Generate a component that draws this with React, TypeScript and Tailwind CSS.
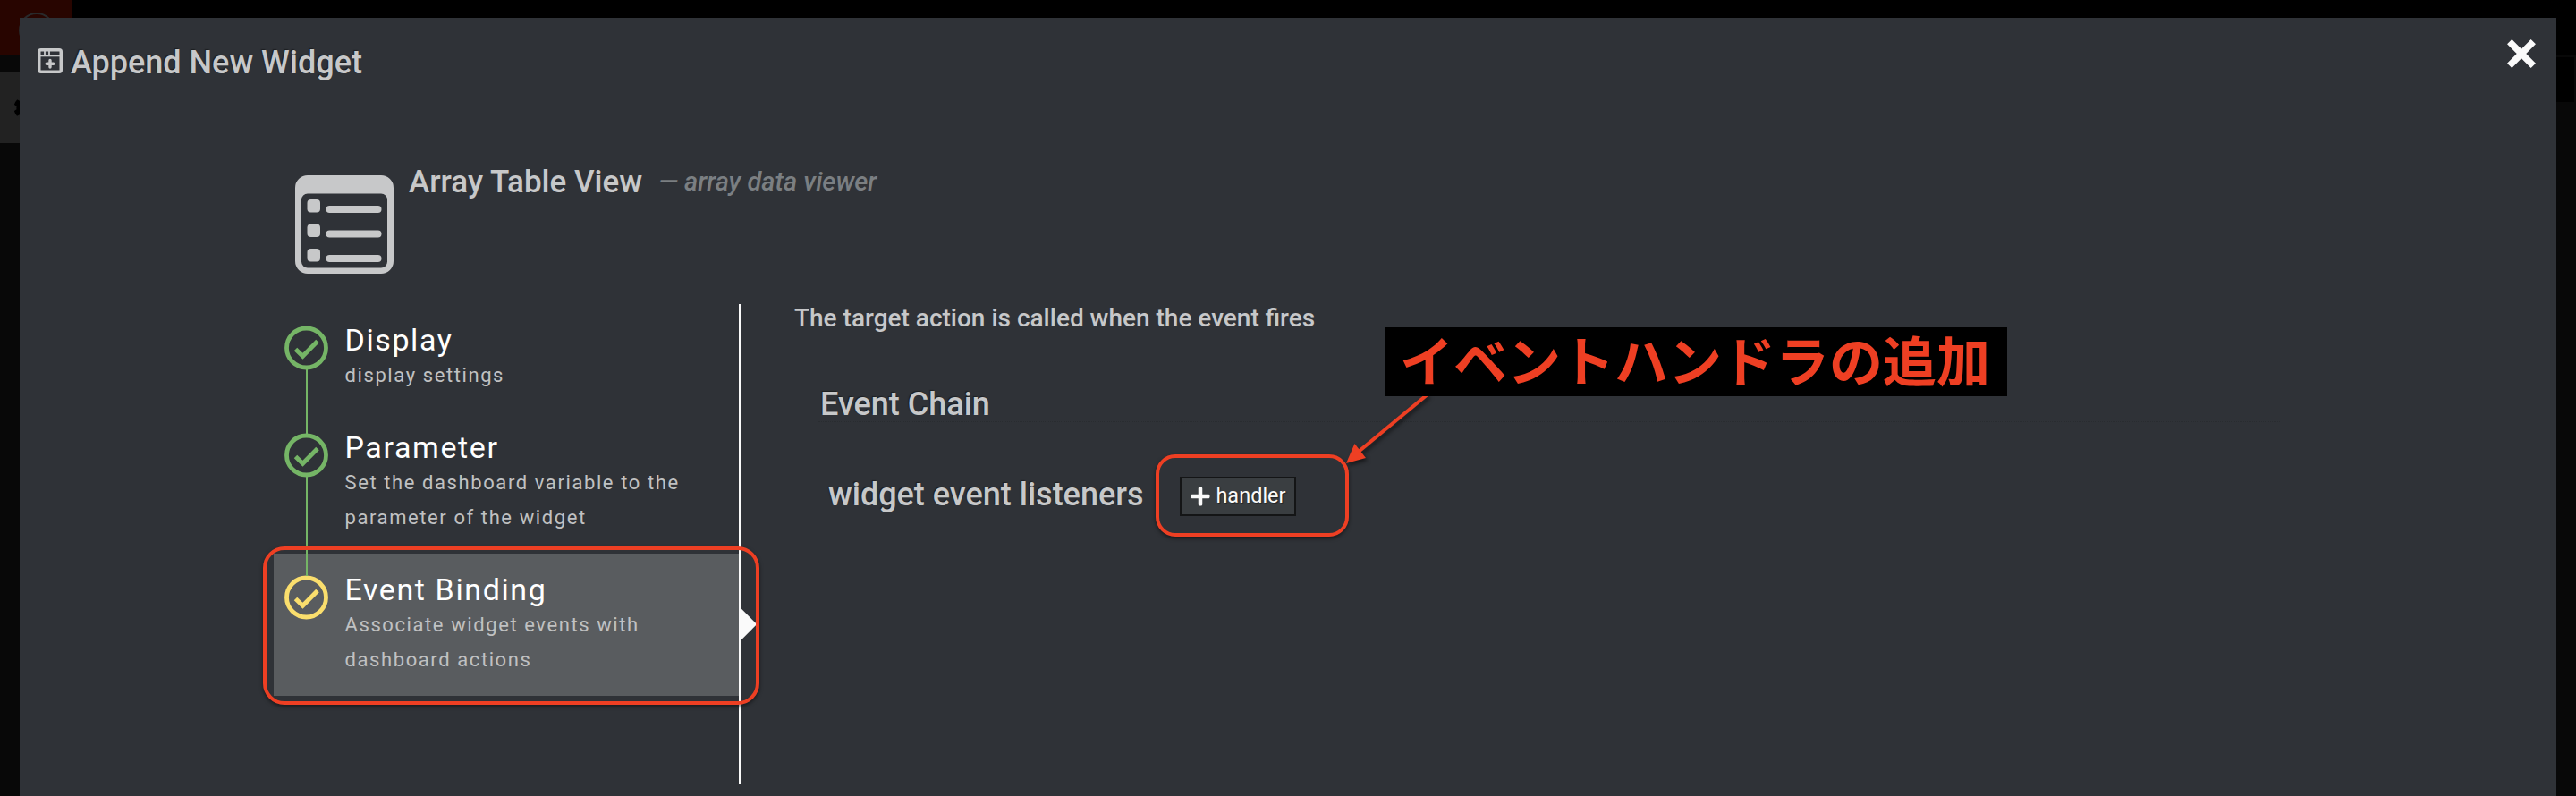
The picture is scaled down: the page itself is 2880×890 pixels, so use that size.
import React from 'react';
import { FaCog, FaPlus } from 'react-icons/fa';

interface Step {
    title: string;
    description: string[];
    active?: boolean;
    height: string;
}

const STEPS: Step[] = [
    { title: 'Display', description: ['display settings'], height: 'h-[120px]' },
    { title: 'Parameter', description: ['Set the dashboard variable to the', 'parameter of the widget'], height: 'h-[159px]' },
    { title: 'Event Binding', description: ['Associate widget events with', 'dashboard actions'], active: true, height: 'h-[159px]' },
];

const WindowPlusIcon: React.FC = () => (
    <svg viewBox="0 0 28 28" className="h-7 w-7 shrink-0" fill="none" stroke="currentColor">
        <rect x="1.75" y="1.75" width="24.5" height="24.5" rx="2" strokeWidth="3.5" />
        <path d="M2 8.3h24" strokeWidth="2" />
        <path d="M8 2v6M13 2v6" strokeWidth="1.8" />
        <path d="M14 13.5v7.600M10.200 17.300h7.600" strokeWidth="3.4" strokeLinecap="round" />
    </svg>
);

const TableIcon: React.FC = () => (
    <svg viewBox="0 0 110 110" className="h-[110px] w-[110px] shrink-0" fill="currentColor">
        <path
            fillRule="evenodd"
            d="M14 0h82a14 14 0 0 1 14 14v82a14 14 0 0 1-14 14H14a14 14 0 0 1-14-14V14A14 14 0 0 1 14 0zM14 20.500a7 7 0 0 0-7 7v69a7 7 0 0 0 7 7h82a7 7 0 0 0 7-7v-69a7 7 0 0 0-7-7z"
        />
        {[0, 27.5, 55].map((y) => (
            <g key={y}>
                <rect x="13.5" y={y + 27} width="14.5" height="14.5" rx="4" />
                <rect x="34.5" y={y + 34} width="62" height="8" rx="4" />
            </g>
        ))}
    </svg>
);

const CheckIcon: React.FC = () => (
    <svg viewBox="0 0 50 50" className="h-[50px] w-[50px]" fill="none" stroke="currentColor">
        <circle cx="25.5" cy="25" r="22" strokeWidth="4.8" />
        <path d="M13.5 26.500l8 7.800L38 17.500" strokeWidth="5" />
    </svg>
);

const StepItem: React.FC<{ step: Step; last: boolean }> = ({ step, last }) => (
    <div className={`relative flex w-[520px] pl-[11px] ${step.height} ${step.active ? 'bg-[#595c5f]' : ''}`}>
        {!last && <div className="absolute top-[73px] left-[36px] z-10 h-[calc(100%-48px)] w-[2px] bg-[#75b566]" />}
        <div className={`pt-[24px] ${step.active ? 'text-[#fade6d]' : 'text-[#75b566]'}`}>
            <CheckIcon />
        </div>
        <div className="pt-[20px] pl-[18.5px] whitespace-nowrap">
            <h3 className="text-[34px] leading-[40px] tracking-[1.6px] text-white">{step.title}</h3>
            {step.description.map((line) => (
                <p key={line} className="text-[22px] leading-[39px] tracking-[1.59px] text-[#c0c1c2]">{line}</p>
            ))}
        </div>
        {step.active && (
            <div className="absolute top-[58px] left-[520px] h-[42px] w-[21px] overflow-hidden">
                <div className="absolute top-[6px] -left-[16px] h-[30px] w-[30px] rotate-45 bg-[#fafafa]" />
            </div>
        )}
    </div>
);

const App: React.FC = () => {
    return (
        <div className="relative h-[890px] w-[2880px] overflow-hidden bg-black font-['Roboto',sans-serif]">
            {/* Dimmed page behind the dialog */}
            <div className="absolute inset-0 flex justify-between">
                <div className="w-20">
                    <div className="flex h-[62px] justify-end bg-[#280500] pt-[14px] pr-[19px]">
                        <div className="h-10 w-10 rounded-full border-2 border-[#292a2b]" />
                    </div>
                    <div className="h-[18px] bg-[#080808]" />
                    <div className="h-20 bg-[#222222] pt-[27px] pl-[15px]">
                        <FaCog className="h-[27px] w-[27px] text-black" />
                    </div>
                    <div className="h-[730px] bg-[#080808]" />
                </div>
                <div className="w-[22px] pt-[62px]">
                    <div className="h-[52px] border-t-2 border-r-2 border-[#080808]" />
                    <div className="h-[776px] bg-[#080808]" />
                </div>
            </div>

            <div className="relative mt-5 ml-[22px] h-[870px] w-[2836px] bg-[#2f3237] text-[#c7c8c9]">
                <header className="flex h-[150px] justify-between pt-[20px] pr-[23px] pl-5">
                    <div className="flex h-[56px] items-center gap-[9px] [text-shadow:-1px_-1px_1px_#1c1e21]">
                        <WindowPlusIcon />
                        <h1 className="pt-[3px] text-[36px] leading-[42px] font-medium whitespace-nowrap">Append New Widget</h1>
                    </div>
                    <svg viewBox="0 0 32 32" className="mt-[4px] h-8 w-8" stroke="#fafafa" strokeWidth="7.5">
                        <path d="M2.700 2.700l26.600 26.600M29.300 2.700L2.700 29.300" />
                    </svg>
                </header>

                <div className="flex h-[170px] pt-[26px] pl-[308px]">
                    <TableIcon />
                    <div className="-mt-[13px] flex h-[42px] pl-[17px] whitespace-nowrap">
                        <h2 className="text-[35px] leading-[42px] font-medium">Array Table View</h2>
                        <span className="pl-[18px] text-[29px] leading-[40px] font-medium italic text-[#7b7f82]">— array data viewer</span>
                    </div>
                </div>

                <div className="flex">
                    <nav className="ml-[284px] h-[537px] w-[522px] border-r-2 border-[#fafafa]">
                        {STEPS.map((step, i) => (
                            <StepItem key={step.title} step={step} last={i === STEPS.length - 1} />
                        ))}
                    </nav>
                    <main className="pl-[60px] whitespace-nowrap">
                        <p className="text-[28px] leading-[32px] font-medium">The target action is called when the event fires</p>
                        <h2 className="mt-[59px] ml-[27px] h-[41px] w-[1634px] border-b border-dotted border-[#292c30] pl-[2px] text-[36px] leading-[42px] font-medium [text-shadow:-1px_-1px_1px_#1c1e21]">Event Chain</h2>
                        <div className="mt-[50px] ml-[38px] flex h-[62px] items-center [text-shadow:-1px_-1px_1px_#1c1e21]">
                            <h3 className="text-[36px] leading-[42px] font-medium">widget event listeners</h3>
                            <button className="mt-1 ml-[41px] flex h-11 w-[130px] items-center justify-center gap-[6px] border-2 border-[#141516] bg-[#3a3e41] text-[23.5px] text-[#fafafa] [text-shadow:1px_1px_1px_#222426]">
                                <FaPlus className="h-[24px] w-[22px]" />
                                handler
                            </button>
                        </div>
                    </main>
                </div>
            </div>

            {/* Callouts */}
            <div className="absolute top-[611px] left-[294px] z-20 h-[177px] w-[555px] rounded-[24px] border-4 border-[#ee3f23] shadow-[0_2px_4px_#00000080]" />
            <div className="absolute top-[508px] left-[1292px] z-20 h-[92px] w-[216px] rounded-[22px] border-4 border-[#ee3f23] shadow-[0_2px_4px_#00000080]" />
            <svg viewBox="0 0 100 84" className="absolute top-[438px] left-[1502px] h-[84px] w-[100px] drop-shadow-[2px_3px_2px_#00000080]">
                <path d="M94 3L18 66" stroke="#ee3f23" strokeWidth="4" />
                <path d="M3 80l9.500-22L25 74z" fill="#ee3f23" />
            </svg>
            <div className="absolute top-[366px] left-[1548px] flex h-[77px] w-[696px] items-center justify-center bg-black pr-[2px] pb-[7px] font-['Noto_Sans_CJK_JP',sans-serif] text-[60px] leading-[70px] font-bold whitespace-nowrap text-[#ee3f23]">
                イベントハンドラの追加
            </div>
        </div>
    );
};

export default App;
